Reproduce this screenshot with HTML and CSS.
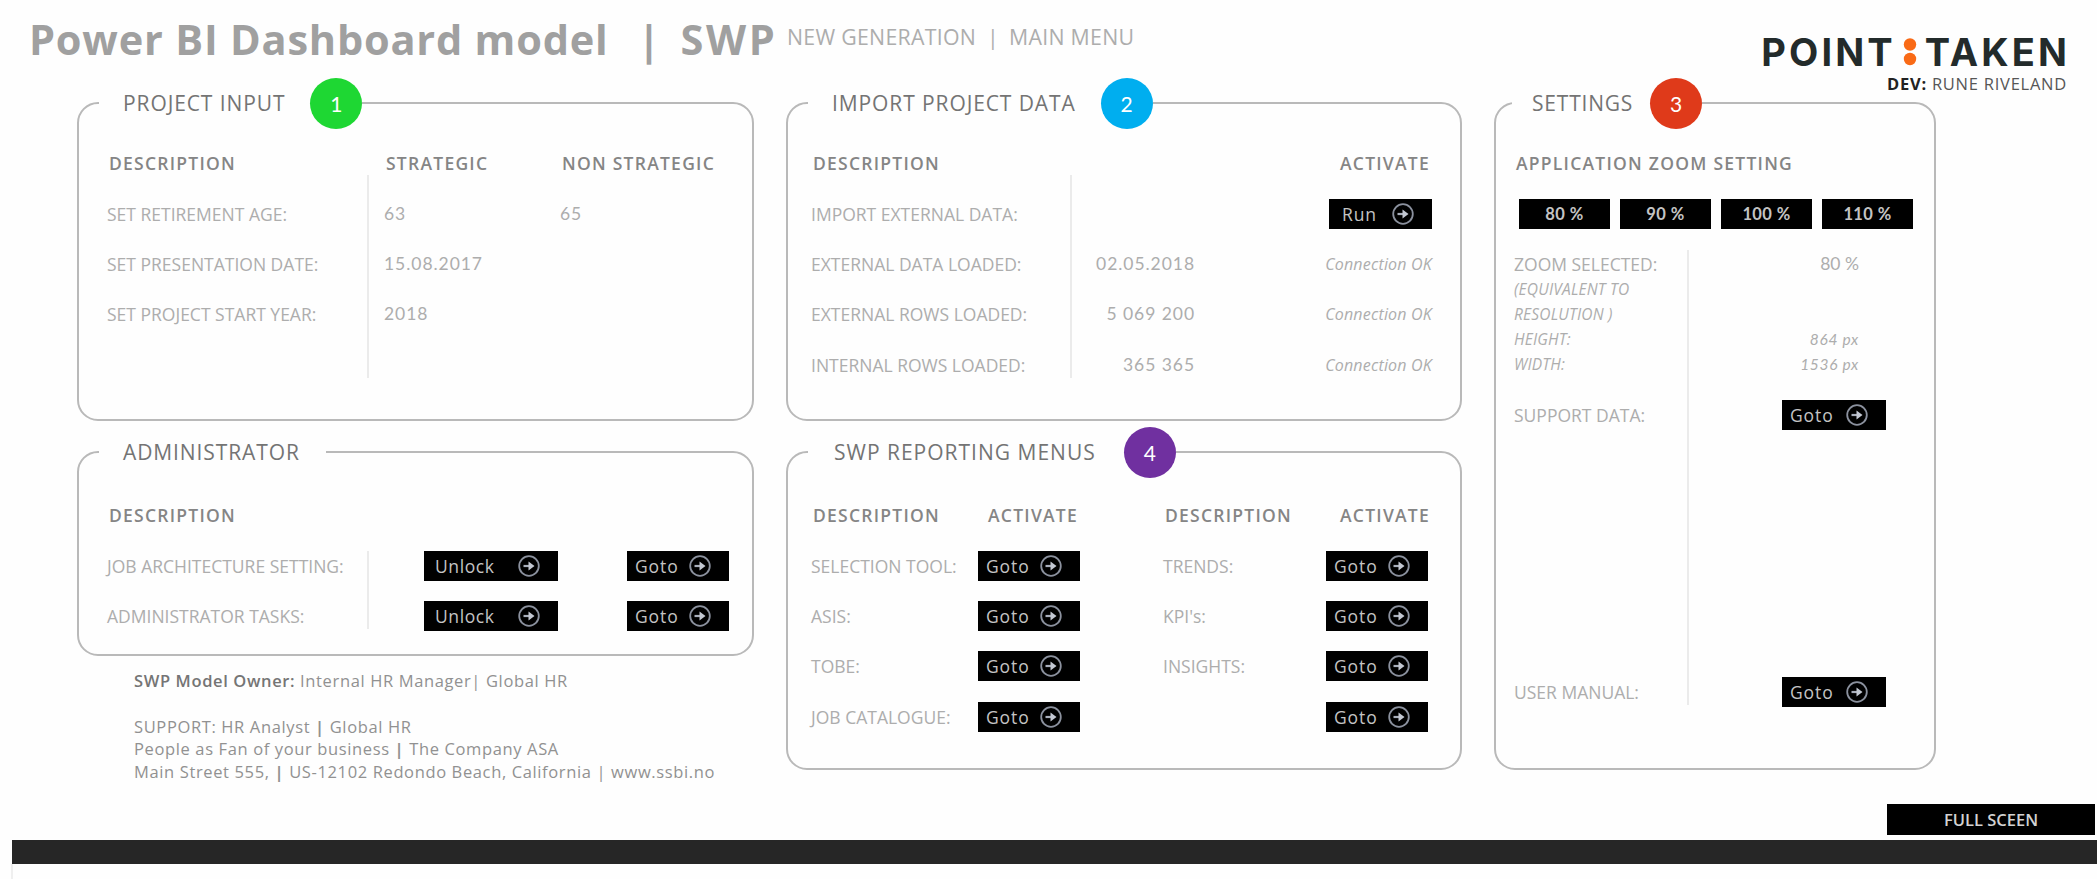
FILE: index.html
```html
<!DOCTYPE html>
<html lang="en">
<head>
<meta charset="utf-8">
<title>SWP Main Menu</title>
<link rel="stylesheet" href="styles.css">
</head>
<body>
<svg width="0" height="0" class="defs">
  <symbol id="go" viewBox="0 0 24 24">
    <circle cx="12" cy="12" r="9.8" fill="none" stroke="#8b919e" stroke-width="1.8"/>
    <path d="M6.5 12h8" stroke="#a9afbb" stroke-width="2.2"/>
    <path d="M11.5 7.5l6 4.5-6 4.5z" fill="#c3c8d2"/>
  </symbol>
</svg>
<header class="top">
  <h1 class="title"><span>Power BI Dashboard model</span><span class="bar">|</span><span class="swp">SWP</span></h1>
  <div class="subtitle"><span>NEW GENERATION</span><span class="bar">|</span><span>MAIN MENU</span></div>
  <div class="brand">
    <div class="logo"><span>POINT</span><svg width="14" height="30" viewBox="0 0 14 30"><circle cx="7" cy="7.5" r="6.2"/><circle cx="7" cy="22" r="6.2"/></svg><span>TAKEN</span></div>
    <div class="dev"><b>DEV:</b> RUNE RIVELAND</div>
  </div>
</header>
<main class="board">
  <div class="column">
    <section class="panel input">
      <h2 class="legend"><span>PROJECT INPUT</span><i class="badge green">1</i></h2>
      <div class="grid">
        <b>DESCRIPTION</b><b class="c2">STRATEGIC</b><b class="c3">NON STRATEGIC</b>
        <span>SET RETIREMENT AGE:</span><span class="c2 num">63</span><span class="c3 num">65</span>
        <span>SET PRESENTATION DATE:</span><span class="c2 num">15.08.2017</span>
        <span class="c1">SET PROJECT START YEAR:</span><span class="c2 num">2018</span>
        <div class="rule"></div>
      </div>
    </section>
    <section class="panel admin">
      <h2 class="legend"><span>ADMINISTRATOR</span></h2>
      <div class="grid">
        <b>DESCRIPTION</b>
        <span class="c1">JOB ARCHITECTURE SETTING:</span><a class="btn unlock c2">Unlock<svg><use href="#go"/></svg></a><a class="btn c3">Goto<svg><use href="#go"/></svg></a>
        <span>ADMINISTRATOR TASKS:</span><a class="btn unlock c2">Unlock<svg><use href="#go"/></svg></a><a class="btn c3">Goto<svg><use href="#go"/></svg></a>
        <div class="rule"></div>
      </div>
    </section>
    <address class="contact">
      <p class="owner"><b>SWP Model Owner:</b> Internal HR Manager| Global HR</p>
      <p class="support">SUPPORT: HR Analyst <em>|</em> Global HR</p>
      <p class="people">People as Fan of your business <em>|</em> The Company ASA</p>
      <p>Main Street 555, <em>|</em> US-12102 Redondo Beach, California | www.ssbi.no</p>
    </address>
  </div>
  <div class="column">
    <section class="panel import">
      <h2 class="legend"><span>IMPORT PROJECT DATA</span><i class="badge blue">2</i></h2>
      <div class="grid">
        <b>DESCRIPTION</b><b class="c3 activate">ACTIVATE</b>
        <span class="c1">IMPORT EXTERNAL DATA:</span><a class="btn c3">Run<svg><use href="#go"/></svg></a>
        <span>EXTERNAL DATA LOADED:</span><span class="c2 num">02.05.2018</span><span class="c3 status">Connection OK</span>
        <span>EXTERNAL ROWS LOADED:</span><span class="c2 num">5 069 200</span><span class="c3 status">Connection OK</span>
        <span>INTERNAL ROWS LOADED:</span><span class="c2 num">365 365</span><span class="c3 status">Connection OK</span>
        <div class="rule"></div>
      </div>
    </section>
    <section class="panel menus">
      <h2 class="legend"><span>SWP REPORTING MENUS</span><i class="badge purple">4</i></h2>
      <div class="grid">
        <b>DESCRIPTION</b><b class="activate">ACTIVATE</b><b>DESCRIPTION</b><b class="activate last">ACTIVATE</b>
        <span>SELECTION TOOL:</span><a class="btn">Goto<svg><use href="#go"/></svg></a><span>TRENDS:</span><a class="btn">Goto<svg><use href="#go"/></svg></a>
        <span>ASIS:</span><a class="btn">Goto<svg><use href="#go"/></svg></a><span>KPI's:</span><a class="btn">Goto<svg><use href="#go"/></svg></a>
        <span>TOBE:</span><a class="btn">Goto<svg><use href="#go"/></svg></a><span>INSIGHTS:</span><a class="btn">Goto<svg><use href="#go"/></svg></a>
        <span>JOB CATALOGUE:</span><a class="btn">Goto<svg><use href="#go"/></svg></a><span></span><a class="btn">Goto<svg><use href="#go"/></svg></a>
      </div>
    </section>
  </div>
  <div class="column">
    <section class="panel settings">
      <h2 class="legend"><span>SETTINGS</span><i class="badge red">3</i></h2>
      <b class="heading">APPLICATION ZOOM SETTING</b>
      <div class="zooms"><a class="btn">80 %</a><a class="btn">90 %</a><a class="btn">100 %</a><a class="btn">110 %</a></div>
      <div class="details">
        <span class="r1">ZOOM SELECTED:</span><span class="value r1">80 %</span>
        <span class="note r2">(EQUIVALENT TO</span>
        <span class="note r3">RESOLUTION )</span>
        <span class="note r4">HEIGHT:</span><span class="value note r4">864 px</span>
        <span class="note r5">WIDTH:</span><span class="value note r5">1536 px</span>
        <span class="r7">SUPPORT DATA:</span><a class="btn r7">Goto<svg><use href="#go"/></svg></a>
        <span class="r18">USER MANUAL:</span><a class="btn r18">Goto<svg><use href="#go"/></svg></a>
        <div class="rule"></div>
      </div>
    </section>
  </div>
</main>
<div class="screen-row"><a class="btn full">FULL SCEEN</a></div>
<footer class="strip"></footer>
<div class="sheet"></div>
</body>
</html>
```
FILE: styles.css
```css
* { box-sizing: border-box; }
body {
  margin: 0;
  width: 2097px;
  height: 879px;
  overflow: hidden;
  display: flex;
  flex-direction: column;
  background: #fefefe;
  color: #adadad;
  font: 17.5px/24px "Open Sans", "Noto Sans", sans-serif;
}
h1, h2, p { margin: 0; font-weight: 400; }
i, em, address { font-style: normal; }
.defs { position: absolute; }

.top { display: flex; height: 102px; padding: 9px 30px 0 29px; white-space: nowrap; }
.title { display: flex; width: 758px; color: #a0a0a0; font-size: 41.5px; font-weight: 700; line-height: 60px; letter-spacing: .8px; }
.title .bar { width: 43px; margin-left: 29px; font-weight: 700; }
.title .swp { letter-spacing: 2.6px; }
.subtitle { display: flex; color: #adadad; font-size: 21.3px; line-height: 56px; letter-spacing: .28px; }
.subtitle .bar { width: 18px; margin: 0 4px 0 11px; }
.brand { display: flex; flex-direction: column; align-items: flex-end; margin-left: auto; padding-top: 20px; }
.logo { display: flex; align-items: center; height: 46px; color: #232b2b; font: 700 38px/46px Inter, sans-serif; letter-spacing: 3.1px; margin-right: -3px; }
.logo svg { margin: 0 8px 0 7px; fill: #f96a16; }
.dev { margin-top: -3px; color: #565656; font-size: 16.5px; letter-spacing: .75px; }
.dev b { color: #222; }

.board { display: grid; grid-template-columns: 677px 676px 442px; column-gap: 32px; height: 702px; padding-left: 77px; white-space: nowrap; }
.column { display: flex; flex-direction: column; }
.panel { position: relative; border: 2px solid #b9b9b9; border-radius: 21px; }
.legend {
  position: absolute; left: 20px; top: -27px; height: 52px;
  display: flex; align-items: center; gap: 25px;
  padding: 0 26px 0 24px; background: #fefefe;
  color: #747474; font-size: 21px; letter-spacing: .9px;
}
.menus .legend { padding-left: 26px; gap: 28px; letter-spacing: 1px; }
.settings .legend { left: 16px; padding-left: 20px; gap: 17px; letter-spacing: .8px; }
.badge {
  width: 52px; height: 51px; margin-right: -26px; border-radius: 50%;
  color: #fff; font: 400 21px/51px Lato, sans-serif; text-align: center; letter-spacing: 0;
}
.green { background: #1ed733; }
.blue { background: #00aeef; }
.red { background: #df3a1a; }
.purple { background: #7030a0; }

.btn {
  display: flex; align-items: center; justify-content: space-between;
  width: 102px; height: 30px; padding: 0 17px 0 8px;
  background: #000; color: #c4c4c4; font-size: 17.5px; letter-spacing: .9px;
}
.btn svg { width: 24px; height: 24px; }

.grid { position: relative; display: grid; grid-auto-rows: 50.35px; align-items: center; }
.grid b, .heading { padding-left: 2px; color: #858585; font-weight: 600; letter-spacing: 1.25px; }
.c1 { grid-column: 1; }
.c2 { grid-column: 2; }
.c3 { grid-column: 3; }
.num { font-family: Lato, sans-serif; letter-spacing: .95px; }
.rule { position: absolute; left: 260px; width: 2px; background: #ebebeb; }

.input { height: 319px; padding: 34px 0 0 28px; }
.input .grid { grid-template-columns: 277px 176px auto; }
.input .rule, .import .rule { top: 37px; height: 203px; }
.admin { height: 205px; margin-top: 30px; padding: 37px 0 0 28px; }
.admin .grid { grid-template-columns: 317px 203px auto; }
.admin .rule { top: 61px; height: 78px; }
.contact { padding: 14px 0 0 57px; color: #919191; font-size: 16.5px; line-height: 22.6px; letter-spacing: .63px; }
.contact b { font-weight: 600; color: #757575; }
.contact em { font-weight: 700; }
.owner { padding-bottom: 23px; }

.import { height: 319px; padding: 34px 28px 0 23px; }
.import .grid { grid-template-columns: 249px 135px auto; }
.import .c2 { text-align: right; }
.import .grid .c3 { margin-left: auto; }
.import .btn { width: 103px; padding-left: 13px; }
.import .rule { left: 259px; }
.import .grid .activate { margin-right: 2px; }
.status { font-style: italic; font-size: 16px; letter-spacing: .2px; }
.menus { height: 319px; margin-top: 30px; padding: 37px 0 0 23px; }
.menus .grid { grid-template-columns: 167px 185px 163px auto; }
.menus .grid .activate { padding-left: 10px; }
.menus .grid .last { padding-left: 14px; }
.unlock { width: 134px; padding-left: 11px; letter-spacing: .6px; }

.settings { height: 668px; padding: 34px 0 0 18px; }
.heading { display: block; line-height: 50px; }
.zooms { display: flex; gap: 10px; padding: 11px 0 0 5px; }
.zooms .btn { justify-content: center; width: 91px; padding: 0; font: 700 16.5px Lato, sans-serif; letter-spacing: .4px; }
.details { position: relative; display: grid; grid-template-columns: 268px 104px; grid-auto-rows: 25.2px; align-items: center; padding-top: 22px; }
.details > span { grid-column: 1; }
.details .value { grid-column: 2; text-align: right; padding-right: 27px; font-family: Lato, sans-serif; }
.details .note { font-style: italic; font-size: 15.5px; letter-spacing: .2px; }
.r1 { grid-row: 1; }
.r2 { grid-row: 2; }
.r3 { grid-row: 3; }
.r4 { grid-row: 4; }
.r5 { grid-row: 5; }
.r7 { grid-row: 7; }
.r18 { grid-row: 18; }
.details .value.note { letter-spacing: .7px; }
.details .btn { grid-column: 2; width: 104px; }
.details .rule { left: 173px; top: 21px; height: 455px; }

.screen-row { display: flex; justify-content: flex-end; height: 36px; padding-right: 2px; }
.full { justify-content: center; width: 208px; height: 31px; padding: 0; font-weight: 600; font-size: 16.5px; letter-spacing: 0; color: #d2d2d2; }
.strip { height: 24px; margin-left: 12px; background: #262626; }
.sheet { flex: 1; margin-left: 11px; border-left: 2px solid #efefef; }
```
